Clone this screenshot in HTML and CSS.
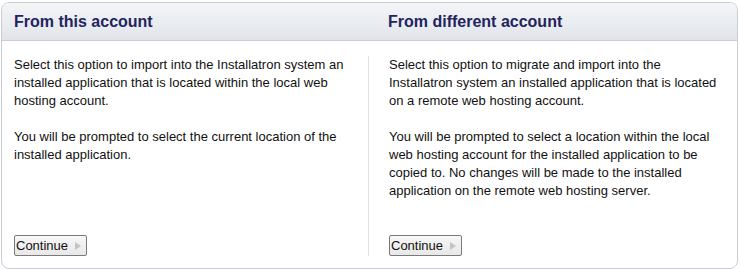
FILE: index.html
```html
<!DOCTYPE html>
<html lang="en">
<head>
  <meta charset="UTF-8">
  <title>Import installation</title>
  <link rel="stylesheet" href="styles.css">
</head>
<body>
  <div class="import-box">
    <div class="import-head">
      <h2>From this account</h2>
      <h2>From different account</h2>
    </div>
    <div class="import-body">
      <div class="option">
        <p>Select this option to import into the Installatron system an installed application that is located within the local web hosting account.</p>
        <p>You will be prompted to select the current location of the installed application.</p>
        <button class="btn">Continue <span class="arrow"></span></button>
      </div>
      <div class="option option-right">
        <p>Select this option to migrate and import into the Installatron system an installed application that is located on a remote web hosting account.</p>
        <p>You will be prompted to select a location within the local web hosting account for the installed application to be copied to. No changes will be made to the installed application on the remote web hosting server.</p>
        <button class="btn">Continue <span class="arrow"></span></button>
      </div>
    </div>
  </div>
</body>
</html>
```

FILE: styles.css
```css
body {
  margin: 0;
  padding: 2px 2px 0 1px;
  font-family: "Liberation Sans", Arial, sans-serif;
  background: #fff;
  color: #111;
}

.import-box {
  width: 735px;
  height: 265px;
  border: 1px solid #c9ced6;
  border-radius: 8px;
  overflow: hidden;
  display: flex;
  flex-direction: column;
}

.import-head {
  display: grid;
  grid-template-columns: 374px 1fr;
  height: 37px;
  background: linear-gradient(#f3f5f7, #e1e5ea);
  border-bottom: 1px solid #c9ced6;
}

.import-head h2 {
  margin: 0;
  padding-left: 12px;
  font-size: 16px;
  line-height: 37px;
  font-weight: bold;
  color: #23245e;
}

.import-body {
  flex: 1;
  display: grid;
  grid-template-columns: 366px 1fr;
  padding: 15px 0 12px;
}

.option {
  display: flex;
  flex-direction: column;
  padding-left: 12px;
  padding-right: 12px;
}

.option-right {
  border-left: 1px solid #dde1e6;
  padding-left: 20px;
  padding-right: 16px;
}

.option p {
  margin: 0 0 18px;
  font-size: 13px;
  line-height: 18px;
}

.btn {
  margin-top: auto;
  align-self: flex-start;
  display: flex;
  align-items: center;
  gap: 7px;
  height: 21px;
  padding: 0 5px 0 1px;
  font-family: "Liberation Sans", Arial, sans-serif;
  font-size: 13px;
  color: #111;
  background: linear-gradient(#f7f7f7, #e8e8e8);
  border: 1px solid #7a7a7a;
  border-radius: 2px;
}

.arrow {
  width: 0;
  height: 0;
  border-top: 4px solid transparent;
  border-bottom: 4px solid transparent;
  border-left: 6px solid #c4c4c4;
}
```
